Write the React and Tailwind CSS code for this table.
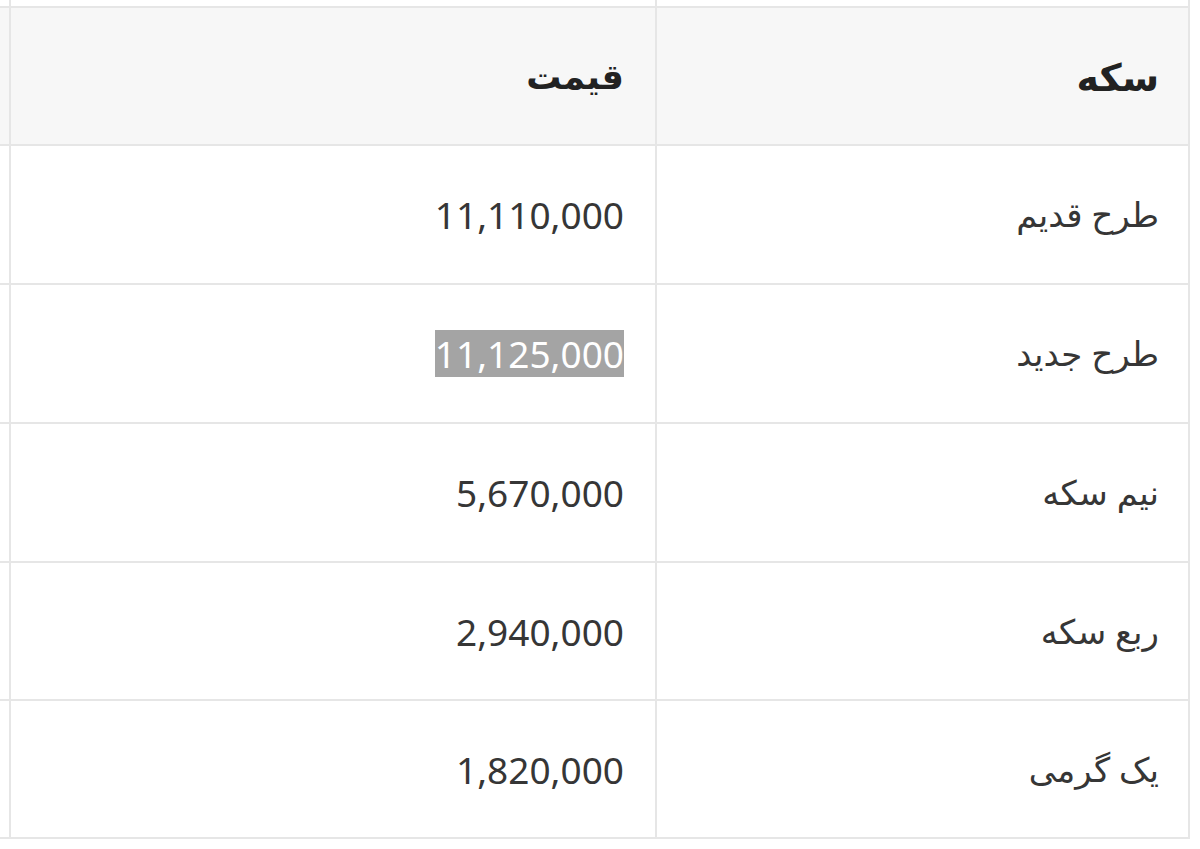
import React from "react";

const rows = [
    { coin: "طرح قدیم", price: "11,110,000", h: "h-[139px]" },
    { coin: "طرح جدید", price: "11,125,000", h: "h-[139px]", selected: true },
    { coin: "نیم سکه", price: "5,670,000", h: "h-[139px]" },
    { coin: "ربع سکه", price: "2,940,000", h: "h-[138px]" },
    { coin: "یک گرمی", price: "1,820,000", h: "h-[138px]" },
];

function App() {
    return (
        <div
            dir="rtl"
            className="w-[1200px] h-[849px] bg-white overflow-hidden text-[#363636] font-['Noto_Sans','DejaVu_Sans',sans-serif]"
        >
            <div className="w-[1190px] mr-[10px]">
                {/* cut-off row above the table */}
                <div className="flex h-[8px] border-b-2 border-[#e6e6e6]">
                    <div className="w-[535px] border-x-2 border-[#e6e6e6]" />
                    <div className="w-[646px] border-l-2 border-[#e6e6e6]" />
                </div>

                <div className="flex h-[138px] border-b-2 border-[#e6e6e6] bg-[#f7f7f7] font-bold text-[#222]">
                    <div className="w-[535px] border-x-2 border-[#e6e6e6] flex items-center pr-[29px] text-[38px]">
                        سکه
                    </div>
                    <div className="w-[646px] border-l-2 border-[#e6e6e6] flex items-center pr-[31px] text-[35px]">
                        قیمت
                    </div>
                </div>

                {rows.map((row) => (
                    <div key={row.coin} className={`flex ${row.h} border-b-2 border-[#e6e6e6]`}>
                        <div className="w-[535px] border-x-2 border-[#e6e6e6] flex items-center pr-[29px] text-[34px]">
                            {row.coin}
                        </div>
                        <div className="w-[646px] border-l-2 border-[#e6e6e6] flex items-center pr-[31px] text-[37px]">
                            <span
                                dir="ltr"
                                className={row.selected ? "bg-[#a4a4a4] text-white leading-[47px]" : "leading-[47px]"}
                            >
                                {row.price}
                            </span>
                        </div>
                    </div>
                ))}
            </div>
        </div>
    );
}

export default App;
